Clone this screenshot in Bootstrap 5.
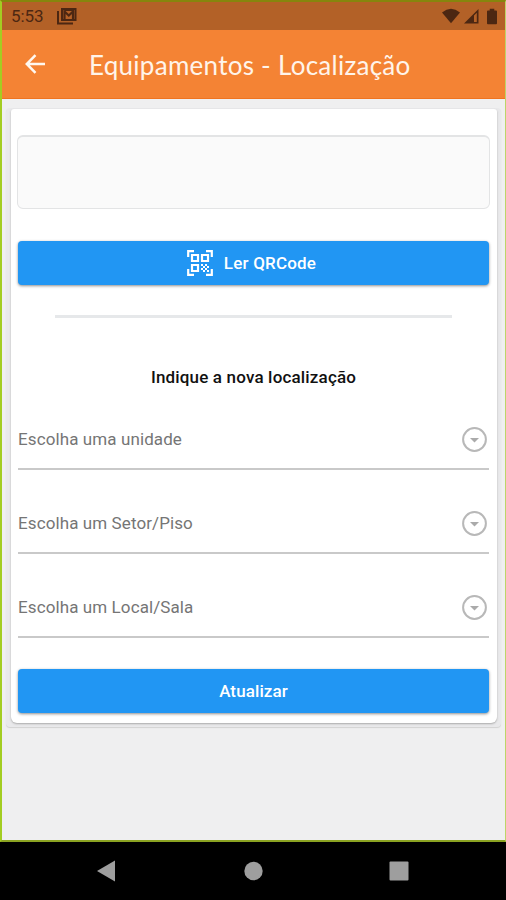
<!DOCTYPE html>
<html lang="pt">
<head>
<meta charset="utf-8">
<meta name="viewport" content="width=device-width, initial-scale=1">
<title>Equipamentos - Localização</title>
<link href="https://cdn.jsdelivr.net/npm/bootstrap@5.3.0/dist/css/bootstrap.min.css" rel="stylesheet">
<style>
body{font-family:Roboto,"Liberation Sans",sans-serif;width:506px;height:900px;overflow:hidden;background:#000}
svg{display:block;flex:none}
.screen{height:842px;background:#efeff0;border:2px solid #a3cd22;border-right:1px solid #bdd568;border-top-color:#86850d;border-bottom-color:#8ba322}
.status{height:28px;background:#b36127;color:#4c2712;padding:0 8px 0 9px}
.clock{font-size:17px;line-height:28px;letter-spacing:-.1px;width:46px;white-space:nowrap}
.appbar{height:69px;background:#f48334;border-bottom:1px solid #ef7420;padding-left:23px;color:#fff4ea}
.title{font-family:Lato,sans-serif;font-size:26px;line-height:34px;margin:2px 0 0 43px;letter-spacing:.27px;white-space:nowrap}
.shell{margin:9px 4px 0 4px;padding:1px 4px 4px 5px;height:619px;background:#e9e9eb;border-radius:4px;box-shadow:0 1px 1px #d2d2d2}
.sheet{height:614px;background:#fff;border:0;border-radius:3px 3px 6px 6px;box-shadow:0 1px 2px #aaa;padding:26px 7px 0 6px}
.result{height:74px;background:#fafafa;border:1px solid #e3e4e5;border-top-width:2px;border-radius:6px}
.act{height:44px;margin:0 1px;background:#2196f3;color:#fff;border:0;border-radius:4px;font-size:17px;font-weight:500;padding:0;line-height:22px;letter-spacing:.1px;box-shadow:0 1px 3px rgba(0,0,0,.45)}
.act:hover{background:#1e8be0;color:#fff}
.scan{margin-top:32px;padding-right:4px}
.scan-label{margin-left:11px;letter-spacing:.2px}
.save{margin-top:7px}
.rule{height:3px;background:#e6e8ea;margin:30px 38px 0}
.prompt{font-size:17px;line-height:22px;font-weight:500;letter-spacing:.17px;color:#111;margin:48px 0 22px}
.pick{height:60px;margin:0 1px 24px;border-bottom:2px solid #c9c9c9;color:#757575;font-size:17px;line-height:24px;letter-spacing:.1px;padding-right:2px}
.sys{height:58px}
</style>
</head>
<body>
<div class="screen d-flex flex-column">
  <div class="status d-flex align-items-center">
    <span class="clock">5:53</span>
    <svg width="20" height="18" viewBox="0 0 20 18" fill="none" stroke="currentColor" stroke-width="2"><path d="M1 4v12.500h15"/><path d="M5 2h13.500v11H5z"/><path d="M7.500 12V4.500l4.300 4 4.200-4V12" stroke-width="2.200"/><path d="M8 3.500h8" stroke-width="1"/></svg>
    <div class="d-flex align-items-center ms-auto">
      <svg width="18" height="16" viewBox="0 0 18 16" fill="currentColor"><path d="M0 4.500Q9-2.800 18 4.500L9 15.200z"/></svg>
      <svg class="ms-1" width="15" height="16" viewBox="0 0 15 16"><path d="M0 15.500 14.500 1v14.500z" fill="currentColor"/><path d="M10 7.500 12.800 4.800V14H10z" fill="#b36127"/></svg>
      <svg class="ms-2" width="10" height="17" viewBox="0 0 11 17" fill="currentColor"><path d="M3 0h5v2h2q1 0 1 1v13q0 1-1 1H1q-1 0-1-1V3q0-1 1-1h2z"/></svg>
    </div>
  </div>
  <header class="appbar d-flex align-items-center">
    <svg width="21" height="20" viewBox="0 0 21 20" fill="none" stroke="#fff8f0" stroke-width="2.500"><path d="M20 10H2M10.500 1.200 1.800 10l8.700 8.800"/></svg>
    <h1 class="title fw-normal">Equipamentos - Localização</h1>
  </header>
  <main class="shell">
    <div class="card sheet">
      <div class="result"></div>
      <button class="btn act scan d-flex align-items-center justify-content-center">
        <svg width="26" height="26" viewBox="0 0 26 26" fill="none" stroke="currentColor" stroke-width="2.200"><path d="M1.200 7V1.200H7M19 1.200h5.800V7M1.200 19v5.800H7M24.800 19v5.800H19"/><path d="M5 5h6v6H5zM15 5h6v6h-6zM5 15h6v6H5z"/><path d="M14 15h2M18 15h2M16 17h2M20 17h2M14 19h2M18 19h2M16 21h2M20 21h2" stroke-width="2"/></svg>
        <span class="scan-label">Ler QRCode</span>
      </button>
      <div class="rule"></div>
      <div class="prompt text-center">Indique a nova localização</div>
      <div class="pick d-flex justify-content-between align-items-center"><span>Escolha uma unidade</span><svg width="25" height="25" viewBox="0 0 25 25"><circle cx="12.500" cy="12.500" r="11.400" fill="none" stroke="#b8b8b8" stroke-width="2"/><path d="M8 11h9l-4.500 4.500z" fill="#aaa"/></svg></div>
      <div class="pick d-flex justify-content-between align-items-center"><span>Escolha um Setor/Piso</span><svg width="25" height="25" viewBox="0 0 25 25"><circle cx="12.500" cy="12.500" r="11.400" fill="none" stroke="#b8b8b8" stroke-width="2"/><path d="M8 11h9l-4.500 4.500z" fill="#aaa"/></svg></div>
      <div class="pick d-flex justify-content-between align-items-center"><span>Escolha um Local/Sala</span><svg width="25" height="25" viewBox="0 0 25 25"><circle cx="12.500" cy="12.500" r="11.400" fill="none" stroke="#b8b8b8" stroke-width="2"/><path d="M8 11h9l-4.500 4.500z" fill="#aaa"/></svg></div>
      <button class="btn act save">Atualizar</button>
    </div>
  </main>
</div>
<nav class="sys d-flex align-items-center">
  <svg width="506" height="58" viewBox="0 0 506 58" fill="#9e9e9e"><path d="M97 29 115 18.500v21z"/><circle cx="253.500" cy="29" r="9.200"/><rect x="389.500" y="19.500" width="19" height="19" rx="1"/></svg>
</nav>
<script src="https://cdn.jsdelivr.net/npm/bootstrap@5.3.0/dist/js/bootstrap.bundle.min.js"></script>
</body>
</html>
